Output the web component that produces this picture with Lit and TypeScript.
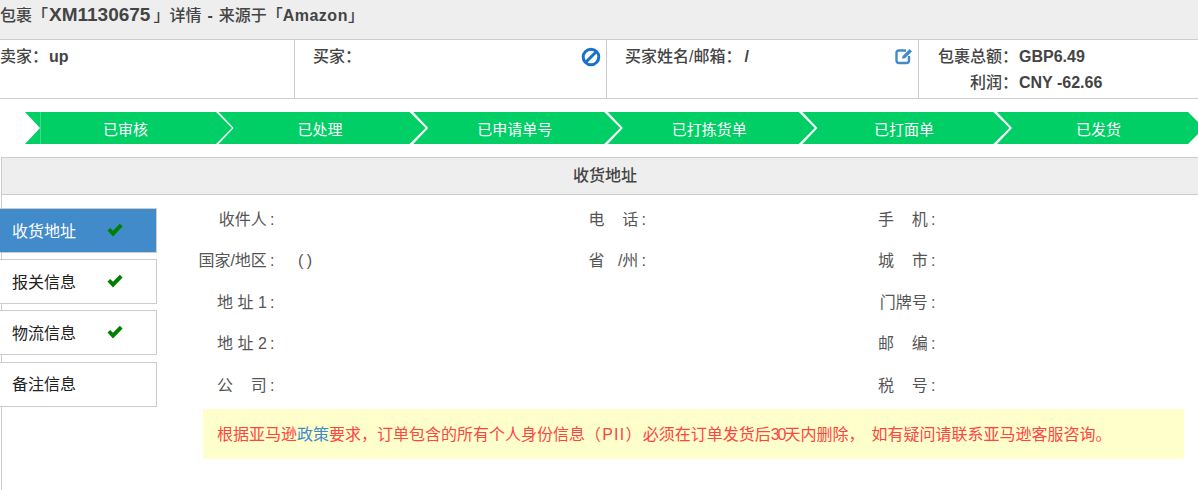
import { LitElement, html, css } from "lit";
import { customElement } from "lit/decorators.js";

const check = html`<svg class="chk" viewBox="0 0 16 14" width="16" height="14"><path d="M0.5 7.6 L3.2 5 L6 7.8 L12.8 0.8 L15.6 3.4 L6 13.4 Z" fill="#008000"/></svg>`;
const ban = html`<svg viewBox="0 0 20 20" width="20" height="20"><circle cx="10" cy="10" r="7.8" fill="none" stroke="#1b70cc" stroke-width="3"/><path d="M5 15 L15 5" stroke="#1b70cc" stroke-width="3"/></svg>`;
const edit = html`<svg viewBox="0 0 18 18" width="18" height="18"><path d="M11 3.5 H4 A2.5 2.5 0 0 0 1.5 6 V13.5 A2.5 2.5 0 0 0 4 16 H11.5 A2.5 2.5 0 0 0 14 13.5 V9" fill="none" stroke="#428bca" stroke-width="2.4"/><path d="M7 11.8 L7.6 9 L14.6 2 L17 4.4 L10 11.2 Z" fill="#428bca"/></svg>`;

const steps = ["已审核", "已处理", "已申请单号", "已打拣货单", "已打面单", "已发货"];

@customElement("app-root")
export class AppRoot extends LitElement {
  static styles = css`
    :host {
      display: block;
      width: 1198px;
      height: 490px;
      overflow: hidden;
      background: #fff;
      color: #444;
      font: 16px "Liberation Sans", Arial, "Noto Sans CJK SC", sans-serif;
    }
    b { font-weight: 700; }
    .title {
      height: 39px;
      background: #eee;
      border-bottom: 1px solid #ccc;
      font-weight: 500;
      line-height: 29px;
      white-space: nowrap;
    }
    .title .num { font-size: 19px; font-weight: 700; margin: 0 3px 0 1px; }
    .title .dash { margin: 0 1.5px; }
    .title .src { letter-spacing: 0.5px; font-weight: 700; }
    .info {
      display: grid;
      grid-template-columns: 295px 312px 312px 1fr;
      height: 58px;
      border-bottom: 1px solid #ccc;
      font-weight: 500;
    }
    .cell {
      display: flex;
      justify-content: space-between;
      align-items: flex-start;
      border-right: 1px solid #ccc;
      padding: 6px 5px 0 18px;
      line-height: 22px;
      white-space: nowrap;
    }
    .cell:first-child { padding-left: 0; }
    .cell svg { margin-top: 1px; }
    .cell .v1 { margin-left: 1px; }
    .cell .v2 { margin-left: 3px; }
    .cell.total {
      border-right: none;
      display: grid;
      grid-template-columns: 81px auto;
      justify-content: start;
      padding-left: 19px;
      row-gap: 4px;
      align-content: start;
    }
    .cell.total .l { text-align: right; padding-right: 1px; }
    .steps {
      display: flex;
      padding: 13px 0 13px 25px;
      overflow: hidden;
      font-size: 15px;
    }
    .step {
      flex: none;
      width: 208px;
      margin-right: -13.4px;
      height: 32px;
      box-sizing: border-box;
      padding-right: 5px;
      display: flex;
      align-items: center;
      justify-content: center;
      background: #00cf65;
      color: #fff;
      clip-path: polygon(0 0, 191px 0, 207px 50%, 191px 100%, 0 100%, 15px 50%);
    }
    .step.first {
      margin-right: -14.4px;
      padding-right: 7px;
      background: linear-gradient(90deg, #00cf65 15px, #40da8a 15px, #40da8a 16px, #00cf65 16px);
    }
    .panel {
      margin-left: 1px;
      border-left: 1px solid #ccc;
      height: 333px;
    }
    .phead {
      height: 36px;
      background: #eee;
      border-top: 1px solid #ccc;
      border-bottom: 1px solid #ccc;
      text-align: center;
      line-height: 36px;
      font-weight: 500;
      padding-left: 10px;
    }
    .pbody { display: flex; }
    .side {
      flex: none;
      width: 157px;
      margin-left: -2px;
      padding-top: 13px;
      display: flex;
      flex-direction: column;
      gap: 6.2px;
    }
    .item {
      height: 45px;
      box-sizing: border-box;
      border: 1px solid #ccc;
      border-left: none;
      background: #fff;
      color: #222;
      display: flex;
      align-items: center;
      padding: 0 0 2px 12px;
    }
    .item.active { background: #428bca; color: #fff; }
    .item span { width: 95px; }
    .chk { margin-top: 1px; }
    .main { flex: 1; min-width: 0; padding-left: 22px; padding-top: 3.75px; }
    .frow {
      display: grid;
      grid-template-columns: 95.5px 276px 95.5px 194px 95.5px 1fr;
      height: 41.5px;
      line-height: 41px;
      white-space: nowrap;
    }
    .lab { text-align: right; color: #555; }
    .val { padding-left: 23.5px; color: #555; letter-spacing: -0.5px; }
    .notice {
      margin: 2.25px 0 0 24px;
      width: 981px;
      height: 50px;
      line-height: 52px;
      background: #ffc;
      color: #f44;
      padding-left: 14px;
      box-sizing: border-box;
      white-space: nowrap;
    }
    .notice b { font-weight: 400; color: #428bca; }
    .notice .pii { letter-spacing: 1.2px; }
    .notice .n30 { letter-spacing: -2px; }
    .notice .cm { margin-right: 7px; }
  `;

  render() {
    return html`
      <div class="title">包裹「<span class="num">XM1130675</span>」详情 <b class="dash">-</b> 来源于「<span class="src">Amazon</span>」</div>
      <div class="info">
        <div class="cell"><span>卖家：<b class="v1">up</b></span></div>
        <div class="cell"><span>买家：</span>${ban}</div>
        <div class="cell"><span>买家姓名/邮箱：<b class="v2">/</b></span>${edit}</div>
        <div class="cell total">
          <span class="l">包裹总额：</span><b>GBP6.49</b>
          <span class="l">利润：</span><b>CNY -62.66</b>
        </div>
      </div>
      <div class="steps">${steps.map((s, i) => html`<div class="step ${i === 0 ? "first" : ""}">${s}</div>`)}</div>
      <div class="panel">
        <div class="phead">收货地址</div>
        <div class="pbody">
          <div class="side">
            <div class="item active"><span>收货地址</span>${check}</div>
            <div class="item"><span>报关信息</span>${check}</div>
            <div class="item"><span>物流信息</span>${check}</div>
            <div class="item"><span>备注信息</span></div>
          </div>
          <div class="main">
            <div class="frow"><div class="lab">收件人&#x2009;:</div><div class="val"></div><div class="lab">电&nbsp;&nbsp;&nbsp;&nbsp;话&#x2009;:</div><div></div><div class="lab">手&nbsp;&nbsp;&nbsp;&nbsp;机&#x2009;:</div><div></div></div>
            <div class="frow"><div class="lab">国家/地区&#x2009;:</div><div class="val">( )</div><div class="lab">省&nbsp;&nbsp;&nbsp;/州&#x2009;:</div><div></div><div class="lab">城&nbsp;&nbsp;&nbsp;&nbsp;市&#x2009;:</div><div></div></div>
            <div class="frow"><div class="lab">地 址 1&#x2009;:</div><div></div><div></div><div></div><div class="lab">门牌号&#x2009;:</div><div></div></div>
            <div class="frow"><div class="lab">地 址 2&#x2009;:</div><div></div><div></div><div></div><div class="lab">邮&nbsp;&nbsp;&nbsp;&nbsp;编&#x2009;:</div><div></div></div>
            <div class="frow"><div class="lab">公&nbsp;&nbsp;&nbsp;&nbsp;司&#x2009;:</div><div></div><div></div><div></div><div class="lab">税&nbsp;&nbsp;&nbsp;&nbsp;号&#x2009;:</div><div></div></div>
            <div class="notice">根据亚马逊<b>政策</b>要求，订单包含的所有个人身份信息<span class="pii">（PII）</span>必须在订单发货后<span class="n30">30</span>天内删除<span class="cm">，</span>如有疑问请联系亚马逊客服咨询。</div>
          </div>
        </div>
      </div>
    `;
  }
}
